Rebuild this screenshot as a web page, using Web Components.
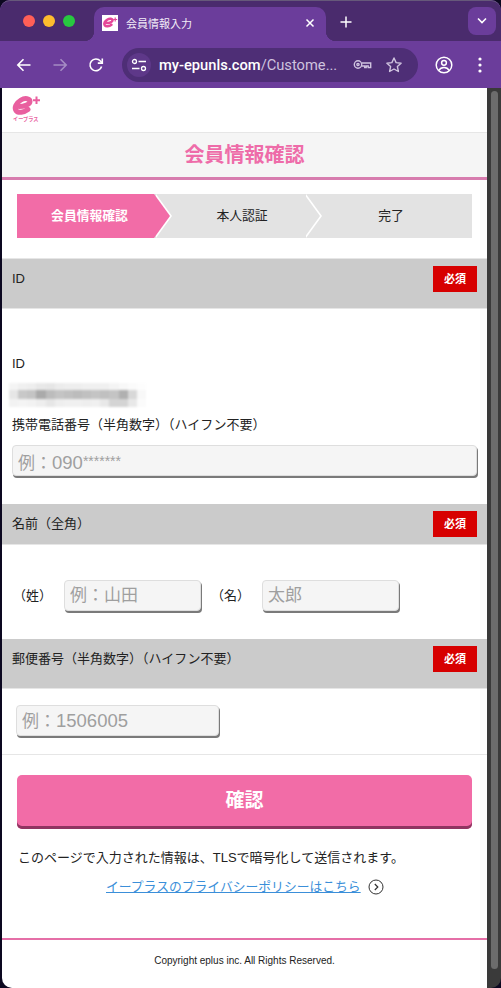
<!DOCTYPE html>
<html lang="ja">
<head>
<meta charset="utf-8">
<title>会員情報入力</title>
<style>
  html, body { margin: 0; height: 100%; background: #0c0820; }
  body { font-family: "Liberation Sans", "Noto Sans CJK JP", sans-serif; color: #222; overflow: hidden; }
  #window { display: flex; flex-direction: column; height: 988px; border-radius: 10px; overflow: hidden; }
  #viewport { display: flex; flex: 1; min-height: 0; padding-left: 2px; }
  #page { flex: 1; min-width: 0; background: #fff; border-bottom-left-radius: 10px; overflow: hidden; }
  .num { font-size: 18.5px; }
  .star { font-size: 14px; vertical-align: 3px; }
</style>
</head>
<body>
<div id="window">
  <browser-chrome></browser-chrome>
  <div id="viewport">
    <main id="page">
      <site-logo></site-logo>
      <page-title>会員情報確認</page-title>
      <step-bar></step-bar>

      <section-head tall first>ID</section-head>
      <field-group pad="45 10 28 10">
        <field-label>ID</field-label>
        <blurred-id></blurred-id>
        <field-label>携帯電話番号（半角数字）（ハイフン不要）</field-label>
        <text-field style="margin-top:10px">例：<span class="num">090</span><span class="star">*******</span></text-field>
      </field-group>

      <section-head>名前（全角）</section-head>
      <field-group pad="35 0 28 0">
        <name-row></name-row>
      </field-group>

      <section-head tall>郵便番号（半角数字）（ハイフン不要）</section-head>
      <field-group pad="16 0 18 14" rule>
        <text-field style="width:201px">例：<span class="num">1506005</span></text-field>
      </field-group>

      <submit-area></submit-area>
      <site-footer></site-footer>
    </main>
    <page-scrollbar></page-scrollbar>
  </div>
</div>

<script>
const CJK = '"Liberation Sans", "Noto Sans CJK JP", sans-serif';
const E_STROKE = "M7 10C12 10 18 8 18 5C18 2 13 1 9 3.500C4 6.500 2 11 4 14C6 17 12 16 16 13";

// base class, every element just renders its template into an open shadow root
class ShadowElement extends HTMLElement {
  constructor() {
    super();
    this.attachShadow({ mode: "open" });
    this.shadowRoot.innerHTML = this.template();
  }
  template() {
    return "<slot></slot>";
  }
}

class BrowserChrome extends ShadowElement {
  template() {
    return `
      <style>
        :host { display: block; height: 88px; background: #6b3d9b; color: #fff; font-family: ${CJK}; }
        svg { display: block; flex: none; }
        .strip { position: relative; display: flex; align-items: flex-end; height: 41px; background: #4a2b6d; box-sizing: border-box; border-top: 1px solid #66597a; padding-left: 23px; border-radius: 10px 10px 0 0; }
        .lights { display: flex; gap: 8px; align-self: flex-start; margin-top: 14px; width: 71px; }
        .lights i { width: 12px; height: 12px; border-radius: 50%; }
        .tab { position: relative; display: flex; align-items: center; width: 232px; height: 34px; background: #6b3d9b; border-radius: 10px 10px 0 0; box-sizing: border-box; padding: 0 10px 2px 8px; font-size: 11px; }
        .tab::before, .tab::after { content: ""; position: absolute; bottom: 0; width: 10px; height: 10px; }
        .tab::before { left: -10px; background: radial-gradient(circle at 0 0, transparent 10px, #6b3d9b 10.5px); }
        .tab::after { right: -10px; background: radial-gradient(circle at 100% 0, transparent 10px, #6b3d9b 10.5px); }
        .fav { width: 16px; height: 16px; background: #fff; margin-right: 8px; }
        .tab span { flex: 1; color: #f2edf7; }
        .plus { margin: 0 0 12px 13px; }
        .more { position: absolute; left: 468px; top: 6px; width: 28px; height: 28px; border-radius: 8px; background: #6b3d9b; display: flex; align-items: center; justify-content: center; }
        .bar { display: flex; align-items: center; height: 47px; }
        .nav { display: flex; width: 122px; padding-left: 15px; box-sizing: border-box; gap: 18px; }
        .omni { display: flex; align-items: center; width: 296px; height: 34px; border-radius: 17px; background: #4e2e76; box-sizing: border-box; padding-left: 5px; }
        .site { width: 24px; height: 24px; border-radius: 50%; background: #5e3889; display: flex; align-items: center; justify-content: center; flex: none; }
        .url { margin-left: 8px; font: 500 14.700px/34px Roboto, sans-serif; width: 194px; white-space: nowrap; color: #fff; }
        .url em { font-style: normal; font-weight: 400; color: #cfc3df; }
        .end { display: flex; align-items: center; margin-left: 16px; gap: 24px; }
      </style>
      <div class="strip">
        <div class="lights"><i style="background:#ff5f57"></i><i style="background:#febc2e"></i><i style="background:#28c840"></i></div>
        <div class="tab">
          <svg class="fav" viewBox="0 0 16 16"><g transform="translate(.5 2.500) scale(.56)" fill="none" stroke="#e5479a" stroke-width="4.500" stroke-linecap="round"><path d="${E_STROKE}"/></g><path d="M13.200 2.500v4M11.200 4.500h4" stroke="#e5479a" stroke-width="1.200"/></svg>
          <span>会員情報入力</span>
          <svg width="12" height="12" viewBox="0 0 12 12" fill="none" stroke="#fff" stroke-width="1.5"><path d="M2.5 2.5l7 7M9.5 2.5l-7 7"/></svg>
        </div>
        <svg class="plus" width="14" height="14" viewBox="0 0 14 14" stroke="#fff" stroke-width="1.5"><path d="M7 1.5v11M1.5 7h11"/></svg>
        <div class="more"><svg width="12" height="8" viewBox="0 0 12 8" fill="none" stroke="#fff" stroke-width="1.6"><path d="M2 1.5l4 4 4-4"/></svg></div>
      </div>
      <div class="bar">
        <div class="nav">
          <svg width="18" height="18" viewBox="0 0 18 18" fill="none" stroke="#fff" stroke-width="1.6"><path d="M15.500 9H3M8.500 3.200L2.800 9l5.700 5.800"/></svg>
          <svg width="18" height="18" viewBox="0 0 18 18" fill="none" stroke="#a58cc4" stroke-width="1.6"><path d="M2.500 9H15M9.500 3.200L15.200 9l-5.700 5.800"/></svg>
          <svg width="18" height="18" viewBox="0 0 18 18" fill="none" stroke="#fff" stroke-width="1.6"><path d="M14.600 10.500A5.900 5.900 0 1 1 13.400 5L15 6.700"/><path d="M15.300 2.600v4.500h-4.500"/></svg>
        </div>
        <div class="omni">
          <div class="site"><svg width="16" height="14" viewBox="0 0 16 14" fill="none" stroke="#fff" stroke-width="1.3"><circle cx="3.500" cy="3.500" r="2"/><path d="M7.500 3.500H15M1 10.500h7.500"/><circle cx="12.500" cy="10.500" r="2"/></svg></div>
          <div class="url">my-epunls.com<em>/Custome...</em></div>
          <svg width="19" height="12" viewBox="0 0 19 12" fill="none" stroke="#cfc3df" stroke-width="1.4"><circle cx="5" cy="5.500" r="3.700"/><circle cx="5" cy="5.500" r="1.100"/><path d="M8.700 4h9v4.500h-2.500V7h-2v1.500h-1.500V7H8.700"/></svg>
          <svg style="margin-left:13px" width="18" height="18" viewBox="0 0 18 18" fill="none" stroke="#cfc3df" stroke-width="1.4" stroke-linejoin="round"><path d="M9 2l2.100 4.600 5 .6-3.700 3.400 1 4.900L9 13l-4.400 2.500 1-4.900L1.900 7.200l5-.6z"/></svg>
        </div>
        <div class="end">
          <svg width="20" height="20" viewBox="0 0 20 20" fill="none" stroke="#fff" stroke-width="1.500"><circle cx="10" cy="10" r="7.800"/><circle cx="10" cy="7.800" r="2.400"/><path d="M4.800 15.500c1.200-2.200 3-3 5.200-3s4 .8 5.200 3"/></svg>
          <svg width="4" height="16" viewBox="0 0 4 16" fill="#fff"><circle cx="2" cy="2" r="1.600"/><circle cx="2" cy="8" r="1.600"/><circle cx="2" cy="14" r="1.600"/></svg>
        </div>
      </div>`;
  }
}

class SiteLogo extends ShadowElement {
  template() {
    return `
      <style>
        :host { display: block; height: 45px; box-sizing: border-box; border-bottom: 1px solid #e6e6e6; padding: 8px 0 0 10px; color: #e95f9f; }
        svg { display: block; }
        .name { font: 700 5.200px/8px ${CJK}; margin-left: 1px; }
      </style>
      <svg width="30" height="19" viewBox="0 0 30 19">
        <g transform="translate(0 .5)" fill="none" stroke="#e95f9f" stroke-width="5" stroke-linecap="round"><path d="${E_STROKE}"/></g>
        <path d="M24.500 .5v7.500M21 4.200h7" stroke="#e95f9f" stroke-width="2"/>
      </svg>
      <div class="name">イープラス</div>`;
  }
}

class PageTitle extends ShadowElement {
  template() {
    return `
      <style>
        :host { display: block; height: 47px; box-sizing: border-box; background: #f5f5f5; border-bottom: 3px solid #d77cae; text-align: center; color: #ee6ca9; font: 700 20px/44px ${CJK}; }
      </style>
      <slot></slot>`;
  }
}

class StepBar extends ShadowElement {
  template() {
    return `
      <style>
        :host { display: block; padding: 14px 15px 20px 15px; font: 12.800px/44px ${CJK}; color: #222; }
        .steps { display: grid; grid-template-columns: 137px 150px 1fr; height: 44px; background: #e3e3e3; overflow: hidden; }
        .step { position: relative; text-align: center; }
        .step::before, .step::after { content: ""; position: absolute; top: 0; width: 16px; height: 44px; clip-path: polygon(0 0, 100% 50%, 0 100%); }
        .step::before { left: calc(100% + 2px); background: #fff; z-index: 1; }
        .step::after { left: 100%; background: #e3e3e3; z-index: 2; }
        .on { background: #f26ca7; color: #fff; font-weight: 700; padding-left: 8px; }
        .on::after { background: #f26ca7; }
        .two { padding-left: 26px; }
        .three { padding-left: 6px; }
        .three::before, .three::after { display: none; }
      </style>
      <div class="steps">
        <div class="step on">会員情報確認</div>
        <div class="step two">本人認証</div>
        <div class="step three">完了</div>
      </div>`;
  }
}

class SectionHead extends ShadowElement {
  template() {
    return `
      <style>
        :host { display: flex; justify-content: space-between; align-items: flex-start; height: 40px; box-sizing: content-box; background: #cbcbcb; padding: 0 10px 0 10px; font: 13px/26px ${CJK}; color: #222; border-bottom: 1px solid #e6e6e6; }
        :host([tall]) { height: 49px; }
        :host([first]) { border-top: 1px solid #e6e6e6; }
        .text { padding-top: 7px; }
        .req { margin-top: 7px; width: 44px; height: 26px; background: #d70000; color: #fff; font: 700 11px/26px ${CJK}; text-align: center; }
      </style>
      <div class="text"><slot></slot></div>
      <div class="req">必須</div>`;
  }
}

class FieldGroup extends ShadowElement {
  template() {
    return `
      <style>
        :host { display: block; font: 13px/20px ${CJK}; }
        :host([rule]) { border-bottom: 1px solid #e6e6e6; }
      </style>
      <slot></slot>`;
  }
  connectedCallback() {
    const p = (this.getAttribute("pad") || "0 0 0 0").split(" ");
    this.style.padding = p.map((v) => v + "px").join(" ");
  }
}

class FieldLabel extends ShadowElement {
  template() {
    return `
      <style>
        :host { display: block; font: 13px/20px ${CJK}; color: #222; }
      </style>
      <slot></slot>`;
  }
}

// the mosaic that hides the member id, sampled by eye from the screenshot
class BlurredId extends ShadowElement {
  template() {
    const rows = [
      "f4 f0 ee e8 e6 ec ee ee f0 f0 f0 f4 f8 fb fd",
      "e6 c8 c4 aa bc c4 c0 bc c0 c4 c0 c4 b0 d8 f8",
      "f2 f4 f2 ee e6 ee f0 f0 ee f0 e8 d4 d4 e8 fb",
    ];
    const cells = rows.map((r) => r.split(" ").map((c) => `<i style="background:#${c}${c}${c}"></i>`).join("")).join("");
    return `
      <style>
        :host { display: grid; grid-template-columns: repeat(15, 1fr); grid-template-rows: 7px 9px 8px; width: 137px; margin: 9px 0 8px -3px; filter: blur(1px); }
      </style>
      ${cells}`;
  }
}

class TextField extends ShadowElement {
  template() {
    return `
      <style>
        :host { display: block; position: relative; height: 29px; box-sizing: content-box; background: #f5f5f5; border: 1px solid #dedede; border-radius: 4px; box-shadow: 1px 2px 0 #7a7a7a; color: #9f9f9f; font: 17px/30px ${CJK}; }
        .hint { display: block; padding-left: 5px; white-space: nowrap; overflow: hidden; }
        input { position: absolute; inset: 0; width: 100%; height: 100%; box-sizing: border-box; border: 0; padding: 0 5px; background: transparent; font: inherit; color: #222; outline: none; }
      </style>
      <span class="hint"><slot></slot></span>
      <input type="text" aria-label="入力">`;
  }
  connectedCallback() {
    const input = this.shadowRoot.querySelector("input");
    const hint = this.shadowRoot.querySelector(".hint");
    input.addEventListener("input", () => {
      hint.style.visibility = input.value ? "hidden" : "visible";
    });
  }
}

class NameRow extends ShadowElement {
  template() {
    return `
      <style>
        :host { display: grid; grid-template-columns: 62px 137px 61px 137px; align-items: center; font: 13px/20px ${CJK}; color: #222; }
        .label { padding-left: 11px; }
        .label.mei { padding-left: 10px; }
      </style>
      <div class="label">（姓）</div>
      <text-field>例：山田</text-field>
      <div class="label mei">（名）</div>
      <text-field>太郎</text-field>`;
  }
}

class SubmitArea extends ShadowElement {
  template() {
    return `
      <style>
        :host { display: block; padding: 20px 15px 0 15px; font: 13px/18px ${CJK}; color: #222; }
        button { display: block; width: 100%; height: 54px; box-sizing: border-box; border: 0; border-radius: 5px; background: #f26ca7; box-shadow: inset 0 -3px 0 #8f3561; color: #fff; font: 700 19px/50px ${CJK}; padding: 0 0 3px; }
        p { margin: 20px 0 0 1px; }
        .policy { display: flex; align-items: center; gap: 7px; margin: 11px 0 0 89px; font-size: 12.800px; }
        a { color: #3b8fd9; text-decoration: underline; }
        svg { display: block; }
      </style>
      <button type="button">確認</button>
      <p>このページで入力された情報は、TLSで暗号化して送信されます。</p>
      <div class="policy">
        <a href="#">イープラスのプライバシーポリシーはこちら</a>
        <svg width="16" height="16" viewBox="0 0 16 16" fill="none" stroke="#333" stroke-width="1"><circle cx="8" cy="8" r="7"/><path d="M6.800 5l3 3-3 3" stroke-width="1.200"/></svg>
      </div>`;
  }
}

class SiteFooter extends ShadowElement {
  template() {
    return `
      <style>
        :host { display: block; margin-top: 42px; border-top: 2px solid #e56fa7; padding-top: 13px; text-align: center; font: 10px/16px ${CJK}; color: #222; }
      </style>
      Copyright eplus inc. All Rights Reserved.`;
  }
}

class PageScrollbar extends ShadowElement {
  template() {
    return `
      <style>
        :host { display: block; flex: none; width: 14px; box-sizing: border-box; background: #3a3a3a; padding: 3px 3px 19px 4px; }
        div { height: 100%; border-radius: 4px; background: #6c6c6c; }
      </style>
      <div></div>`;
  }
}

customElements.define("browser-chrome", BrowserChrome);
customElements.define("site-logo", SiteLogo);
customElements.define("page-title", PageTitle);
customElements.define("step-bar", StepBar);
customElements.define("section-head", SectionHead);
customElements.define("field-group", FieldGroup);
customElements.define("field-label", FieldLabel);
customElements.define("blurred-id", BlurredId);
customElements.define("text-field", TextField);
customElements.define("name-row", NameRow);
customElements.define("submit-area", SubmitArea);
customElements.define("site-footer", SiteFooter);
customElements.define("page-scrollbar", PageScrollbar);
</script>
</body>
</html>
